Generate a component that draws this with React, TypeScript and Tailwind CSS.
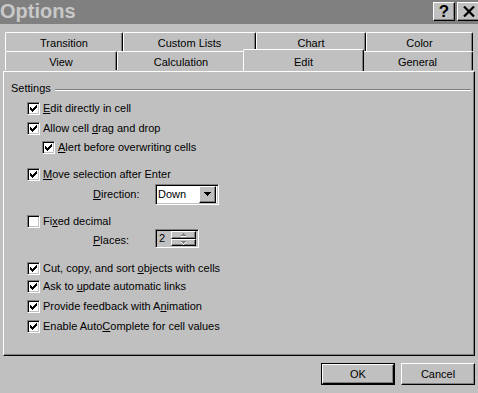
import React from "react";

const raised =
  "border border-t-white border-l-white border-r-black border-b-black shadow-[inset_-1px_-1px_0_#808080]";
const sunken =
  "border border-t-[#808080] border-l-[#808080] border-r-white border-b-white shadow-[inset_1px_1px_0_#000,inset_-1px_-1px_0_#c0c0c0]";

function Check() {
  return (
    <svg width="7" height="7" viewBox="0 0 7 7" shapeRendering="crispEdges">
      <rect x="6" y="0" width="1" height="1" fill="#000" />
      <rect x="5" y="1" width="2" height="1" fill="#000" />
      <rect x="0" y="2" width="1" height="1" fill="#000" />
      <rect x="4" y="2" width="3" height="1" fill="#000" />
      <rect x="0" y="3" width="2" height="1" fill="#000" />
      <rect x="3" y="3" width="3" height="1" fill="#000" />
      <rect x="0" y="4" width="5" height="1" fill="#000" />
      <rect x="1" y="5" width="3" height="1" fill="#000" />
      <rect x="2" y="6" width="1" height="1" fill="#000" />
    </svg>
  );
}

function CheckBox({ checked }: { checked: boolean }) {
  return (
    <span className={`w-[13px] h-[13px] bg-white flex items-center justify-center shrink-0 ${sunken}`}>
      {checked ? <Check /> : null}
    </span>
  );
}

function Row({
  checked,
  children,
  indent,
  mt,
}: {
  checked: boolean;
  children: React.ReactNode;
  indent: string;
  mt: string;
}) {
  return (
    <div className={`flex items-center h-[20px] gap-[3px] ${indent} ${mt}`}>
      <CheckBox checked={checked} />
      <span className="leading-none">{children}</span>
    </div>
  );
}

function Tab({
  label,
  w,
  selected,
}: {
  label: string;
  w: string;
  selected?: boolean;
}) {
  if (selected) {
    return (
      <div
        className={`${w} relative z-10 -mt-[2px] h-[22px] -mx-[2px] bg-[#c0c0c0] border-t border-l border-white border-r border-r-black shadow-[inset_-1px_0_0_#808080] rounded-t-[2px] flex items-start justify-center pt-[4px]`}
      >
        {label}
      </div>
    );
  }
  return (
    <div
      className={`${w} h-[19px] bg-[#c0c0c0] border-t border-l border-white border-r border-r-black shadow-[inset_-1px_0_0_#808080] rounded-t-[2px] flex items-center justify-center pt-[2px]`}
    >
      {label}
    </div>
  );
}

export default function App() {
  return (
    <div
      className="w-[478px] h-[393px] bg-[#c0c0c0] text-black text-[11px] overflow-hidden flex flex-col"
      style={{ fontFamily: '"Liberation Sans", Arial, sans-serif' }}
    >
      {/* Title bar */}
      <div className="h-[24px] bg-[#808080] flex items-center justify-between shrink-0">
        <span className="text-[20px] font-bold text-[#c8c8c8] leading-none ml-[0px] -mt-[2px]">
          Options
        </span>
        <div className="flex gap-[2px] mr-[-2px] -mt-[1px]">
          <div className={`w-[22px] h-[19px] bg-[#c0c0c0] flex items-center justify-center font-bold text-[17px] leading-none ${raised}`}>
            ?
          </div>
          <div className={`w-[23px] h-[19px] bg-[#c0c0c0] flex items-center justify-center ${raised}`}>
            <svg width="12" height="11" viewBox="0 0 12 11">
              <path d="M1 0.5 L11 10.5 M11 0.5 L1 10.5" stroke="#000" strokeWidth="2.2" />
            </svg>
          </div>
        </div>
      </div>

      {/* Tabs */}
      <div className="mt-[8px] flex pl-[5px]">
        <Tab label="Transition" w="w-[118px]" />
        <Tab label="Custom Lists" w="w-[133px]" />
        <Tab label="Chart" w="w-[110px]" />
        <Tab label="Color" w="w-[107px]" />
      </div>
      <div className="flex pl-[5px]">
        <Tab label="View" w="w-[112px]" />
        <Tab label="Calculation" w="w-[128px]" />
        <Tab label="Edit" w="w-[121px]" selected />
        <Tab label="General" w="w-[111px]" />
      </div>

      {/* Panel */}
      <div className="ml-[3px] w-[472px] h-[285px] border-t border-l border-white border-r border-b border-r-black border-b-black shadow-[inset_-1px_-1px_0_#808080] flex flex-col shrink-0">
        <div className="flex items-center h-[14px] mt-[9px] pl-[7px] pr-[3px]">
          <span className="leading-none">Settings</span>
          <div className="flex-1 ml-[4px] h-[2px] border-t border-t-[#808080] border-b border-b-white mt-[3px]" />
        </div>

        <Row checked indent="pl-[23px]" mt="mt-[3px]">
          <u>E</u>dit directly in cell
        </Row>
        <Row checked indent="pl-[23px]" mt="mt-[0px]">
          Allow cell <u>d</u>rag and drop
        </Row>
        <Row checked indent="pl-[38px]" mt="-mt-[1px]">
          <u>A</u>lert before overwriting cells
        </Row>
        <Row checked indent="pl-[23px]" mt="mt-[7px]">
          <u>M</u>ove selection after Enter
        </Row>

        {/* Direction */}
        <div className="flex items-center h-[20px] pl-[89px] mt-[0px]">
          <span className="w-[62px] leading-none">
            <u>D</u>irection:
          </span>
          <div className={`w-[64px] h-[21px] bg-white flex items-center ${sunken}`}>
            <span className="flex-1 pl-[2px] leading-none">Down</span>
            <div className={`w-[17px] h-[17px] mr-[2px] bg-[#c0c0c0] flex items-center justify-center ${raised}`}>
              <svg width="7" height="4" viewBox="0 0 7 4" shapeRendering="crispEdges">
                <path d="M0 0 H7 L3.5 4 Z" fill="#000" />
              </svg>
            </div>
          </div>
        </div>

        <Row checked={false} indent="pl-[23px]" mt="mt-[7px]">
          Fi<u>x</u>ed decimal
        </Row>

        {/* Places */}
        <div className="flex items-center h-[20px] pl-[89px] -mt-[1px]">
          <span className="w-[62px] leading-none">
            <u>P</u>laces:
          </span>
          <div className={`w-[44px] h-[19px] bg-[#c0c0c0] flex items-center -mt-[3px] ${sunken}`}>
            <span className="flex-1 pl-[3px] leading-none">2</span>
            <div className="flex flex-col mr-[2px]">
              <div className={`w-[25px] h-[8px] bg-[#c0c0c0] flex items-center justify-center ${raised}`}>
                <svg width="7" height="4" viewBox="0 0 7 4" shapeRendering="crispEdges">
                  <path d="M1 4 L3.5 1 L6 4 Z" fill="#ffffff" />
                  <path d="M0 3 L3 0 L6 3 Z" fill="#808080" />
                </svg>
              </div>
              <div className={`w-[25px] h-[7px] bg-[#c0c0c0] flex items-center justify-center ${raised}`}>
                <svg width="7" height="4" viewBox="0 0 7 4" shapeRendering="crispEdges">
                  <path d="M1 1 L6 1 L3.5 4 Z" fill="#ffffff" />
                  <path d="M0 0 L6 0 L3 3 Z" fill="#808080" />
                </svg>
              </div>
            </div>
          </div>
        </div>

        <Row checked indent="pl-[23px]" mt="mt-[8px]">
          Cut, copy, and sort <u>o</u>bjects with cells
        </Row>
        <Row checked indent="pl-[23px]" mt="-mt-[2px]">
          Ask to <u>u</u>pdate automatic links
        </Row>
        <Row checked indent="pl-[23px]" mt="mt-[0px]">
          Provide feedback with A<u>n</u>imation
        </Row>
        <Row checked indent="pl-[23px]" mt="mt-[0px]">
          Enable Auto<u>C</u>omplete for cell values
        </Row>
      </div>

      {/* Buttons */}
      <div className="mt-[7px] flex justify-end gap-[6px] pr-[3px]">
        <div className="w-[74px] h-[22px] border border-black">
          <div className={`w-full h-full flex items-center justify-center ${raised}`}>OK</div>
        </div>
        <div className={`w-[74px] h-[22px] flex items-center justify-center ${raised}`}>Cancel</div>
      </div>
    </div>
  );
}
